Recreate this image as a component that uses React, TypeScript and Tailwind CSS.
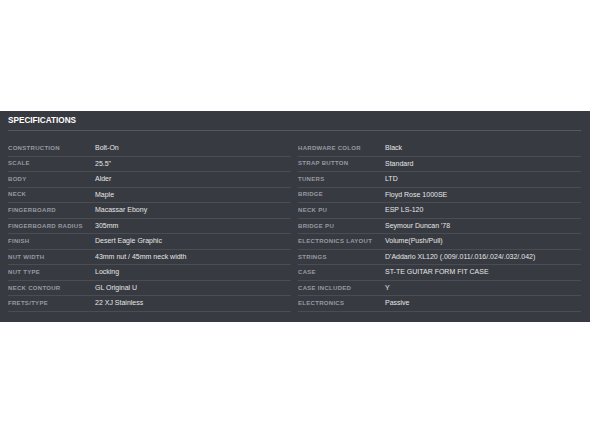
const left = [
  ['Construction', 'Bolt-On'],
  ['Scale', '25.5"'],
  ['Body', 'Alder'],
  ['Neck', 'Maple'],
  ['Fingerboard', 'Macassar Ebony'],
  ['Fingerboard Radius', '305mm'],
  ['Finish', 'Desert Eagle Graphic'],
  ['Nut Width', '43mm nut / 45mm neck width'],
  ['Nut Type', 'Locking'],
  ['Neck Contour', 'GL Original U'],
  ['Frets/Type', '22 XJ Stainless'],
];

const right = [
  ['Hardware Color', 'Black'],
  ['Strap Button', 'Standard'],
  ['Tuners', 'LTD'],
  ['Bridge', 'Floyd Rose 1000SE'],
  ['Neck PU', 'ESP LS-120'],
  ['Bridge PU', "Seymour Duncan '78"],
  ['Electronics Layout', 'Volume(Push/Pull)'],
  ['Strings', "D'Addario XL120 (.009/.011/.016/.024/.032/.042)"],
  ['Case', 'ST-TE GUITAR FORM FIT CASE'],
  ['Case Included', 'Y'],
  ['Electronics', 'Passive'],
];

function SpecColumn({ rows }: { rows: string[][] }) {
  return (
    <div className="flex flex-col">
      {rows.map(([label, value]) => (
        <div key={label} className="flex items-center h-[15.55px] border-b border-[#4a4d54]">
          <span className="w-[87px] shrink-0 text-[6px] font-bold uppercase tracking-[0.3px] text-[#979aa1]">
            {label}
          </span>
          <span className="text-[7px] text-[#e6e6e6] whitespace-nowrap">{value}</span>
        </div>
      ))}
    </div>
  );
}

export default function App() {
  return (
    <div className="w-[590px] h-[434px] bg-white font-['Liberation_Sans',Arial,sans-serif]">
      <div className="h-[111px]" />
      <div className="bg-[#373a41] pl-[8px] pr-[9px] pt-[4px] pb-[10px]">
        <div className="border-b border-[#55585f] pb-[3px]">
          <h2 className="text-[8.2px] leading-[12px] font-bold text-white uppercase">Specifications</h2>
        </div>
        <div className="grid grid-cols-2 gap-x-[7px] mt-[10px]">
          <SpecColumn rows={left} />
          <SpecColumn rows={right} />
        </div>
      </div>
    </div>
  );
}
